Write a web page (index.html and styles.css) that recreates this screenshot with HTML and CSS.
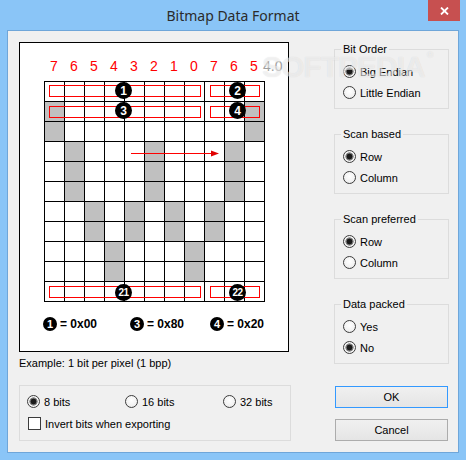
FILE: index.html
```html
<!DOCTYPE html>
<html>
<head>
<meta charset="utf-8">
<link rel="stylesheet" href="styles.css">
</head>
<body>
<div class="window">
  <div class="titlebar">
    <span class="title">Bitmap Data Format</span>
    <div class="close"><svg width="9" height="8" viewBox="0 0 9 8"><path d="M1 0.5 L8 7.5 M8 0.5 L1 7.5" stroke="#fff" stroke-width="1.8"/></svg></div>
  </div>
  <div class="client">
    <div class="left">
      <div class="picture">
        <div class="labels"><span>7</span><span>6</span><span>5</span><span>4</span><span>3</span><span>2</span><span>1</span><span>0</span><span>7</span><span>6</span><span>5</span><span class="ver">4.0</span></div>
        <div class="gridwrap">
          <div class="grid">
            <i></i><i></i><i></i><i></i><i></i><i></i><i></i><i></i><i></i><i></i><i></i>
            <i class="g"></i><i></i><i></i><i></i><i></i><i></i><i></i><i></i><i></i><i></i><i class="g"></i>
            <i class="g"></i><i></i><i></i><i></i><i></i><i></i><i></i><i></i><i></i><i></i><i class="g"></i>
            <i></i><i class="g"></i><i></i><i></i><i></i><i class="g"></i><i></i><i></i><i></i><i class="g"></i><i></i>
            <i></i><i class="g"></i><i></i><i></i><i></i><i class="g"></i><i></i><i></i><i></i><i class="g"></i><i></i>
            <i></i><i class="g"></i><i></i><i></i><i></i><i class="g"></i><i></i><i></i><i></i><i class="g"></i><i></i>
            <i></i><i></i><i class="g"></i><i></i><i class="g"></i><i></i><i class="g"></i><i></i><i class="g"></i><i></i><i></i>
            <i></i><i></i><i class="g"></i><i></i><i class="g"></i><i></i><i class="g"></i><i></i><i class="g"></i><i></i><i></i>
            <i></i><i></i><i></i><i class="g"></i><i></i><i></i><i></i><i class="g"></i><i></i><i></i><i></i>
            <i></i><i></i><i></i><i class="g"></i><i></i><i></i><i></i><i class="g"></i><i></i><i></i><i></i>
            <i></i><i></i><i></i><i></i><i></i><i></i><i></i><i></i><i></i><i></i><i></i>
          </div>
          <div class="rect r-a row0"></div>
          <div class="rect r-b row0"></div>
          <div class="rect r-a row1"></div>
          <div class="rect r-b row1"></div>
          <div class="rect r-a row10"></div>
          <div class="rect r-b row10"></div>
          <svg class="arrow" width="221" height="221" viewBox="0 0 221 221"><path d="M87 72.5 H168" stroke="#f00" stroke-width="1"/><path d="M167 69.5 L175 72.5 L167 75.5 Z" fill="#e00000"/></svg>
          <span class="badge b-a b-r0">1</span>
          <span class="badge b-a b-r1">3</span>
          <span class="badge b-b b-r0">2</span>
          <span class="badge b-b b-r1">4</span>
          <span class="badge two b-a b-r10">21</span>
          <span class="badge two b-b b-r10">22</span>
        </div>
        <div class="legend">
          <div class="item"><span class="sbadge">1</span><b>= 0x00</b></div>
          <div class="item"><span class="sbadge">3</span><b>= 0x80</b></div>
          <div class="item"><span class="sbadge">4</span><b>= 0x20</b></div>
        </div>
      </div>
      <div class="example">Example: 1 bit per pixel (1 bpp)</div>
      <div class="opts">
        <div class="bits">
          <label class="opt"><span class="radio on"></span>8 bits</label>
          <label class="opt"><span class="radio"></span>16 bits</label>
          <label class="opt"><span class="radio"></span>32 bits</label>
        </div>
        <label class="opt check-row"><span class="check"></span>Invert bits when exporting</label>
      </div>
    </div>
    <div class="right">
      <fieldset>
        <legend>Bit Order</legend>
        <div class="row"><span class="radio on"></span>Big Endian</div>
        <div class="row"><span class="radio"></span>Little Endian</div>
      </fieldset>
      <fieldset>
        <legend>Scan based</legend>
        <div class="row"><span class="radio on"></span>Row</div>
        <div class="row"><span class="radio"></span>Column</div>
      </fieldset>
      <fieldset>
        <legend>Scan preferred</legend>
        <div class="row"><span class="radio on"></span>Row</div>
        <div class="row"><span class="radio"></span>Column</div>
      </fieldset>
      <fieldset class="last">
        <legend>Data packed</legend>
        <div class="row"><span class="radio"></span>Yes</div>
        <div class="row"><span class="radio on"></span>No</div>
      </fieldset>
      <div class="btn ok">OK</div>
      <div class="btn cancel">Cancel</div>
    </div>
  </div>
  <div class="watermark">SOFTPEDIA<sup>®</sup></div>
</div>
</body>
</html>
```
FILE: styles.css
```css
html, body {
  margin: 0;
  padding: 0;
}
body {
  width: 466px;
  height: 460px;
  overflow: hidden;
  font-family: "Liberation Sans", Arial, sans-serif;
  font-size: 11px;
  color: #000;
}
.window {
  width: 466px;
  height: 460px;
  background: #8ac5f7;
  display: flex;
  flex-direction: column;
  position: relative;
  box-sizing: border-box;
}
.titlebar {
  height: 30px;
  flex: none;
  display: flex;
  align-items: center;
  justify-content: center;
  position: relative;
}
.title {
  font-family: "Noto Sans", sans-serif;
  font-size: 14px;
  color: #2b2b2b;
  margin-top: 1px;
}
.close {
  position: absolute;
  top: 0;
  right: 6px;
  width: 32px;
  height: 21px;
  background: #c75050;
  display: flex;
  align-items: center;
  justify-content: center;
}
.client {
  flex: 1;
  margin: 0 7px 7px;
  border: 1px solid #6fa6d9;
  background: #f0f0f0;
  display: flex;
  padding-left: 11px;
}
.left {
  width: 272px;
  display: flex;
  flex-direction: column;
}
.picture {
  margin-top: 11px;
  width: 270px;
  height: 310px;
  box-sizing: border-box;
  border: 1px solid #000;
  background: #fff;
  padding: 15px 0 0 24px;
}
.labels {
  display: flex;
  height: 16px;
  line-height: 16px;
  font-size: 14px;
  color: #f00;
}
.labels span {
  width: 20px;
  text-align: center;
}
.labels .ver {
  width: auto;
  color: #a0a0a0;
  margin-left: -1px;
}
.gridwrap {
  margin-top: 7px;
  position: relative;
  width: 221px;
  height: 221px;
}
.grid {
  display: grid;
  grid-template-columns: repeat(11, 19px);
  grid-auto-rows: 19px;
  gap: 1px;
  background: #000;
  border: 1px solid #000;
  width: max-content;
}
.grid i {
  background: #fff;
}
.grid i.g {
  background: #c0c0c0;
}
.rect {
  position: absolute;
  height: 12px;
  box-sizing: border-box;
  border: 1px solid #f00;
}
.r-a { left: 5px; width: 152px; }
.r-b { left: 166px; width: 50px; }
.row0 { top: 4px; }
.row1 { top: 25px; }
.row10 { top: 205px; }
.arrow {
  position: absolute;
  left: 0;
  top: 0;
}
.badge {
  position: absolute;
  width: 17px;
  height: 17px;
  border-radius: 50%;
  background: #000;
  color: #fff;
  font-weight: bold;
  font-size: 12px;
  display: flex;
  align-items: center;
  justify-content: center;
}
.badge.two {
  font-size: 10px;
  letter-spacing: -0.5px;
}
.b-a { left: 71px; }
.b-b { left: 185px; }
.b-r0 { top: 1px; }
.b-r1 { top: 21px; }
.b-r10 { top: 203px; }
.legend {
  display: grid;
  grid-template-columns: 87px 80px auto;
  margin: 14px 0 0 -1px;
  height: 16px;
  align-items: center;
}
.legend .item {
  display: flex;
  align-items: center;
  gap: 3px;
}
.sbadge {
  width: 14px;
  height: 14px;
  border-radius: 50%;
  background: #000;
  color: #fff;
  font-weight: bold;
  font-size: 11px;
  display: flex;
  align-items: center;
  justify-content: center;
}
.legend b {
  font-size: 12px;
}
.example {
  margin-top: 5px;
  line-height: 13px;
}
.opts {
  margin-top: 15px;
  width: 272px;
  height: 56px;
  box-sizing: border-box;
  border: 1px solid #dcdcdc;
  padding: 7px 0 0 7px;
  display: flex;
  flex-direction: column;
  gap: 5px;
}
.bits {
  display: grid;
  grid-template-columns: 98px 98px auto;
}
.opt {
  display: flex;
  align-items: center;
  gap: 4px;
  height: 17px;
}
.check-row {
  padding-left: 1px;
}
.radio {
  width: 13px;
  height: 13px;
  box-sizing: border-box;
  border-radius: 50%;
  border: 1px solid #3c3c3c;
  background: radial-gradient(circle at 50% 40%, #ffffff 0, #f2f2f2 60%, #dedede 100%);
  flex: none;
}
.radio.on {
  background: radial-gradient(circle, #1a1a1a 0 2.6px, #7a7a7a 3.2px 3.8px, #f4f4f4 4.4px);
}
.check {
  width: 13px;
  height: 13px;
  box-sizing: border-box;
  border: 1px solid #3c3c3c;
  background: #fff;
  flex: none;
}
.right {
  margin-left: 43px;
  width: 115px;
  display: flex;
  flex-direction: column;
  padding-top: 11px;
}
fieldset {
  margin: 0 0 18px;
  padding: 5px 0 5px 8px;
  border: 1px solid #dcdcdc;
  width: 115px;
  box-sizing: border-box;
  min-width: 0;
}
fieldset.last {
  margin-bottom: 22px;
}
legend {
  padding: 0 2px;
  margin-left: -2px;
  line-height: 14px;
  font-size: 11px;
}
.row {
  height: 21px;
  display: flex;
  align-items: center;
  gap: 4px;
}
.btn {
  width: 113px;
  height: 22px;
  margin-left: 1px;
  box-sizing: border-box;
  border: 1px solid #acacac;
  background: linear-gradient(#f0f0f0, #e5e5e5);
  display: flex;
  align-items: center;
  justify-content: center;
  font-size: 11px;
}
.btn.ok {
  border-color: #3399ff;
}
.btn.cancel {
  margin-top: 11px;
}
.watermark {
  position: absolute;
  left: 262px;
  top: 50px;
  font-family: "Liberation Sans", Arial, sans-serif;
  font-weight: bold;
  font-size: 30px;
  letter-spacing: -1px;
  color: rgba(255, 255, 255, 0.55);
  text-shadow: 0 0 1px rgba(0, 0, 0, 0.12);
  pointer-events: none;
}
.watermark sup {
  font-size: 9px;
  vertical-align: top;
  margin-left: 2px;
}
```
